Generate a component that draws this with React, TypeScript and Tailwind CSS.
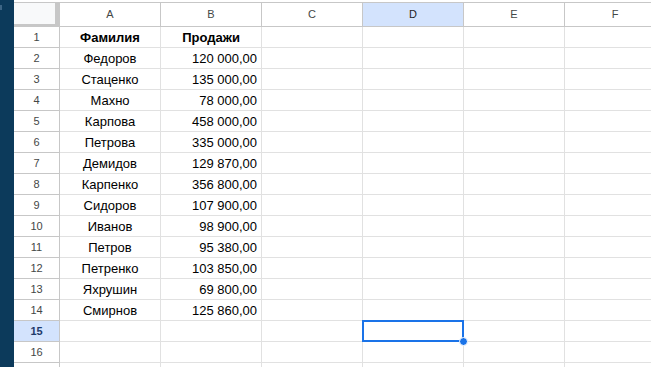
import React from "react";

const columns = ["A", "B", "C", "D", "E", "F"];

const rows: [string, string][] = [
  ["Федоров", "120 000,00"],
  ["Стаценко", "135 000,00"],
  ["Махно", "78 000,00"],
  ["Карпова", "458 000,00"],
  ["Петрова", "335 000,00"],
  ["Демидов", "129 870,00"],
  ["Карпенко", "356 800,00"],
  ["Сидоров", "107 900,00"],
  ["Иванов", "98 900,00"],
  ["Петров", "95 380,00"],
  ["Петренко", "103 850,00"],
  ["Яхрушин", "69 800,00"],
  ["Смирнов", "125 860,00"],
];

const ACTIVE_COL = "D";
const ACTIVE_ROW = 15;

function Cell({ children, className = "" }: { children?: React.ReactNode; className?: string }) {
  return (
    <div className={`relative h-[21px] w-[101px] shrink-0 border-r border-b border-[#e1e1e1] pt-[1px] text-[13px] leading-[20px] text-black ${className}`}>
      {children}
    </div>
  );
}

export default function App() {
  const body: { num: number; a: string; b: string; bold?: boolean }[] = [
    { num: 1, a: "Фамилия", b: "Продажи", bold: true },
    ...rows.map(([a, b], i) => ({ num: i + 2, a, b })),
    { num: 15, a: "", b: "" },
    { num: 16, a: "", b: "" },
    { num: 17, a: "", b: "" },
  ];

  return (
    <div className="flex h-[367px] w-[651px] overflow-hidden bg-white font-['Liberation_Sans',Arial,sans-serif]">
      {/* side strip */}
      <div className="relative w-[14px] shrink-0 bg-[#0c3a5b]">
        <div className="absolute left-0 top-[5px] h-[5px] w-[2px] bg-[#3d6585]" />
      </div>

      <div className="flex-1 overflow-hidden pt-[2px]">
        {/* column headers */}
        <div className="flex">
          <div className="h-[25px] w-[46px] shrink-0 border-t border-r-[5px] border-b-[3px] border-[#c7c7c7] bg-[#f8f9fa]" />
          {columns.map((c) => (
            <div
              key={c}
              className={`flex h-[25px] w-[101px] shrink-0 items-center justify-center border-t border-r border-b border-[#c7c7c7] text-[11px] ${
                c === ACTIVE_COL ? "bg-[#d3e3fd] text-[#1f1f1f]" : "bg-white text-[#444746]"
              }`}
            >
              {c}
            </div>
          ))}
        </div>

        {/* rows */}
        {body.map((r) => {
          const active = r.num === ACTIVE_ROW;
          return (
            <div key={r.num} className="flex">
              <div
                className={`flex h-[21px] w-[46px] shrink-0 items-center justify-center border-r border-b border-[#c7c7c7] text-[11px] ${
                  active ? "bg-[#d3e3fd] font-bold text-[#1e3a6b]" : "bg-white text-[#444746]"
                }`}
              >
                {r.num < 17 ? r.num : ""}
              </div>
              <Cell className={`text-center ${r.bold ? "font-bold" : ""}`}>{r.a}</Cell>
              <Cell className={r.bold ? "text-center font-bold" : "pr-[4px] text-right"}>{r.b}</Cell>
              <Cell />
              <Cell>
                {active && (
                  <>
                    <div className="absolute -left-[1px] -top-[1px] h-[22px] w-[102px] border-2 border-[#1a73e8]" />
                    <div className="absolute -bottom-[5px] -right-[5px] z-10 h-[9px] w-[9px] rounded-full border border-white bg-[#1a73e8]" />
                  </>
                )}
              </Cell>
              <Cell />
              <Cell />
            </div>
          );
        })}
      </div>
    </div>
  );
}
